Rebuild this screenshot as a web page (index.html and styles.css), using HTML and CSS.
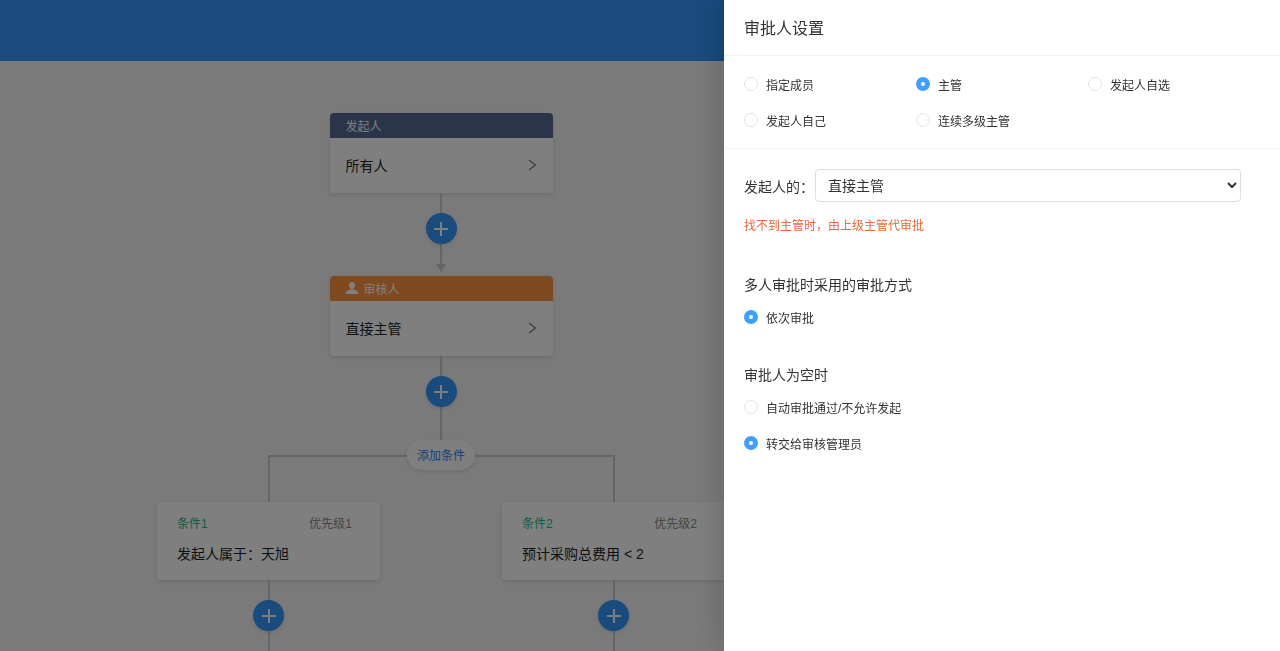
FILE: index.html
```html
<!DOCTYPE html>
<html lang="zh-CN">
<head>
  <meta charset="UTF-8" />
  <meta name="viewport" content="width=device-width, initial-scale=1.0" />
  <title>审批流程</title>
  <link rel="stylesheet" href="styles.css">
</head>
<body>
  <header class="top-bar"></header>

  <!-- 流程图 -->
  <main class="canvas">
    <div class="flow">
      <section class="node">
        <div class="node-title start">发起人</div>
        <div class="node-body">
          <span>所有人</span>
          <svg class="chevron" viewBox="0 0 10 12"><path d="M2 1 8.500 6 2 11" /></svg>
        </div>
      </section>
      <div class="add-box arrow">
        <button type="button" class="add-btn" aria-label="添加节点"><svg viewBox="0 0 16 16"><path d="M8 1v14M1 8h14" /></svg></button>
      </div>

      <section class="node">
        <div class="node-title approver">
          <svg class="user" viewBox="0 0 12 12"><path d="M6 0C4.200 0 3 1.300 3 3.200c0 1.600.6 2.700 1.600 3.400v1L1.300 8.800C.5 9.100 0 9.700 0 10.500V12h12v-1.500c0-.8-.5-1.400-1.300-1.700L7.400 7.600v-1C8.400 5.900 9 4.800 9 3.200 9 1.300 7.800 0 6 0z" /></svg>
          审核人
        </div>
        <div class="node-body">
          <span>直接主管</span>
          <svg class="chevron" viewBox="0 0 10 12"><path d="M2 1 8.500 6 2 11" /></svg>
        </div>
      </section>
      <div class="add-box">
        <button type="button" class="add-btn" aria-label="添加节点"><svg viewBox="0 0 16 16"><path d="M8 1v14M1 8h14" /></svg></button>
      </div>

      <button type="button" class="add-condition">添加条件</button>

      <!-- 条件分支 -->
      <div class="branches">
        <div class="branch">
          <div class="link link-first"></div>
          <section class="condition">
            <div class="condition-head">
              <span class="name">条件1</span>
              <span class="priority">优先级1</span>
            </div>
            <div class="condition-text">发起人属于：天旭</div>
          </section>
          <div class="add-box">
            <button type="button" class="add-btn" aria-label="添加节点"><svg viewBox="0 0 16 16"><path d="M8 1v14M1 8h14" /></svg></button>
          </div>
        </div>
        <div class="branch">
          <div class="link link-last"></div>
          <section class="condition">
            <div class="condition-head">
              <span class="name">条件2</span>
              <span class="priority">优先级2</span>
            </div>
            <div class="condition-text">预计采购总费用 &lt; 2</div>
          </section>
          <div class="add-box">
            <button type="button" class="add-btn" aria-label="添加节点"><svg viewBox="0 0 16 16"><path d="M8 1v14M1 8h14" /></svg></button>
          </div>
        </div>
      </div>
    </div>
  </main>

  <div class="mask"></div>

  <!-- 审批人设置 -->
  <aside class="drawer">
    <h1>审批人设置</h1>
    <form>
      <div class="type-group">
        <label class="radio"><input type="radio" name="type" value="1">指定成员</label>
        <label class="radio"><input type="radio" name="type" value="2" checked>主管</label>
        <label class="radio"><input type="radio" name="type" value="3">发起人自选</label>
        <label class="radio"><input type="radio" name="type" value="4">发起人自己</label>
        <label class="radio"><input type="radio" name="type" value="5">连续多级主管</label>
      </div>

      <div class="settings">
        <div class="select-row">
          <label for="level">发起人的：</label>
          <select id="level">
            <option>直接主管</option>
          </select>
        </div>
        <p class="tip">找不到主管时，由上级主管代审批</p>

        <h2>多人审批时采用的审批方式</h2>
        <label class="radio"><input type="radio" name="mode" value="1" checked>依次审批</label>

        <h2>审批人为空时</h2>
        <label class="radio"><input type="radio" name="empty" value="1">自动审批通过/不允许发起</label>
        <label class="radio"><input type="radio" name="empty" value="2" checked>转交给审核管理员</label>
      </div>
    </form>
  </aside>
</body>
</html>
```

FILE: styles.css
```css
* {
  box-sizing: border-box;
}

body {
  margin: 0;
  height: 100vh;
  display: flex;
  flex-direction: column;
  overflow: hidden;
  font-family: "Liberation Sans", "Noto Sans CJK SC", sans-serif;
  font-size: 14px;
  color: #191f25;
  background: #f5f5f7;
}

button,
select {
  font-family: inherit;
}

.top-bar {
  flex: none;
  height: 61px;
  background: #3296fa;
}

/* flow chart */
.canvas {
  flex: 1;
  overflow: hidden;
  isolation: isolate;
  padding: 52px 0 0 96px;
}

.flow {
  width: 690px;
  display: flex;
  flex-direction: column;
  align-items: center;
}

.node,
.condition {
  width: 223px;
  background: #fff;
  border-radius: 4px;
  box-shadow: 0 2px 5px rgba(0, 0, 0, 0.1);
}

.node-title {
  display: flex;
  align-items: center;
  gap: 6px;
  height: 25px;
  padding: 0 16px 1px;
  font-size: 12px;
  color: #fff;
  border-radius: 4px 4px 0 0;
}

.start {
  background: #576a95;
}

.approver {
  background: #ff943e;
}

.user {
  width: 12px;
  height: 12px;
  fill: #fff;
}

.node-body {
  display: flex;
  align-items: center;
  justify-content: space-between;
  height: 55px;
  padding: 0 16px 2px;
}

.chevron {
  width: 10px;
  height: 12px;
  fill: none;
  stroke: #777;
  stroke-width: 1.2;
}

.add-box {
  display: flex;
  flex-direction: column;
  align-items: center;
  width: 100%;
  height: 84px;
  padding-top: 20px;
  background: linear-gradient(#cacaca, #cacaca) center top / 2px 100% no-repeat;
}

.add-box.arrow {
  height: 83px;
  justify-content: space-between;
  padding-bottom: 4px;
  background-size: 2px 72px;
}

.add-box.arrow::after {
  content: "";
  border: 5px solid transparent;
  border-top: 8px solid #cacaca;
  border-bottom: 0;
}

.add-btn {
  display: flex;
  align-items: center;
  justify-content: center;
  width: 31px;
  height: 31px;
  padding: 0;
  border: none;
  border-radius: 50%;
  background: #3296fa;
  box-shadow: 0 2px 4px rgba(0, 0, 0, 0.1);
  cursor: pointer;
}

.add-btn svg {
  width: 16px;
  height: 16px;
  stroke: #fff;
  stroke-width: 2;
}

.add-condition {
  position: relative;
  z-index: 1;
  height: 30px;
  margin-bottom: -15px;
  padding: 0 10px 1px;
  border: none;
  border-radius: 15px;
  background: #fff;
  box-shadow: 0 2px 4px rgba(0, 0, 0, 0.1);
  font-size: 12px;
  color: #2a80f0;
  cursor: pointer;
}

.branches {
  display: flex;
  width: 100%;
}

.branch {
  flex: 1;
  display: flex;
  flex-direction: column;
  align-items: center;
}

.link {
  width: calc(50% + 1px);
  height: 47px;
  border-top: 2px solid #cacaca;
}

.link-first {
  align-self: flex-end;
  border-left: 2px solid #cacaca;
}

.link-last {
  align-self: flex-start;
  border-right: 2px solid #cacaca;
}

.condition {
  height: 78px;
  padding: 12px 28px 0 20px;
}

.condition-head {
  display: flex;
  justify-content: space-between;
  font-size: 12px;
  line-height: 20px;
}

.name {
  color: #15bc83;
}

.priority {
  color: #888;
}

.condition-text {
  margin-top: 8px;
  line-height: 24px;
}

.mask {
  position: fixed;
  inset: 0;
  background: rgba(0, 0, 0, 0.5);
}

/* settings drawer */
.drawer {
  position: fixed;
  top: 0;
  right: 0;
  bottom: 0;
  width: 556px;
  max-width: 100%;
  overflow: auto;
  background: #fff;
  box-shadow: 0 0 30px rgba(0, 0, 0, 0.2);
  color: #333;
}

.drawer h1 {
  margin: 0;
  padding: 2px 20px 0;
  border-bottom: 1px solid #f2f2f2;
  font-size: 16px;
  font-weight: normal;
  line-height: 53px;
}

.drawer h2 {
  margin: 30px 0 8px;
  font-size: 14px;
  font-weight: normal;
  line-height: 20px;
}

.type-group {
  display: grid;
  grid-template-columns: repeat(3, 1fr);
  padding: 10px 20px;
  border-bottom: 1px solid #f2f2f2;
}

.radio {
  display: flex;
  align-items: center;
  gap: 8px;
  height: 36px;
  font-size: 12px;
}

.radio input {
  appearance: none;
  width: 14px;
  height: 14px;
  margin: 0;
  border: 1px solid #e4e4e4;
  border-radius: 50%;
  background: #fff;
}

.radio input:checked {
  border: 5px solid #409eff;
}

.settings {
  padding: 20px;
}

.select-row {
  display: flex;
  align-items: center;
  gap: 1px;
  margin-right: 19px;
}

.select-row select {
  flex: 1;
  height: 33px;
  padding: 0 0 0 8px;
  border: 1px solid #dcdfe6;
  border-radius: 4px;
  background: #fff;
  font-size: 14px;
  color: #333;
}

.tip {
  margin: 14px 0 0;
  font-size: 12px;
  line-height: 20px;
  color: #e8683a;
}

.tip + h2 {
  margin-top: 39px;
}

.settings h2 + .radio {
  margin-top: -4px;
}
```
